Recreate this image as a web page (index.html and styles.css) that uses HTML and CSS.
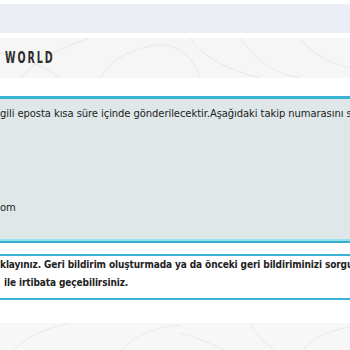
FILE: index.html
```html
<!DOCTYPE html>
<html lang="tr">
<head>
<meta charset="utf-8">
<link rel="stylesheet" href="styles.css">
</head>
<body>
<div class="page">
  <div class="topbar"></div>
  <header class="brand">
    <svg class="texture" width="350" height="40" viewBox="0 0 350 40" aria-hidden="true">
      <g fill="none" stroke="#e8e8e8" stroke-width="1">
        <path d="M20 40 C40 20 60 10 90 0"/>
        <path d="M100 40 C110 25 120 15 150 8 C170 4 190 10 200 40"/>
        <path d="M190 0 C200 15 220 30 260 40"/>
        <path d="M240 0 C255 20 270 35 300 40"/>
        <path d="M300 0 C310 15 330 25 350 30"/>
        <path d="M0 15 C20 20 40 25 60 40"/>
      </g>
    </svg>
    <span class="logo">WORLD</span>
  </header>

  <section class="notice">
    <p class="line">gili eposta kısa süre içinde gönderilecektir.Aşağıdaki takip numarasını saklayınız.</p>
    <p class="line mail">om</p>
  </section>

  <section class="help">
    <p class="line">klayınız. Geri bildirim oluşturmada ya da önceki geri bildiriminizi sorgulamada sorun yaşarsanız</p>
    <p class="line second">ile irtibata geçebilirsiniz.</p>
  </section>

  <footer class="foot">
    <svg class="texture" width="350" height="30" viewBox="0 0 350 30" aria-hidden="true">
      <g fill="none" stroke="#eaeaea" stroke-width="1">
        <path d="M10 30 C25 15 45 5 70 0"/>
        <path d="M120 30 C130 15 150 5 180 2"/>
        <path d="M180 10 C200 15 220 25 230 30"/>
        <path d="M250 0 C255 10 265 22 280 30"/>
        <path d="M300 30 C310 18 325 8 350 4"/>
      </g>
    </svg>
  </footer>
</div>
</body>
</html>
```
FILE: styles.css
```css
html, body {
  margin: 0;
  padding: 0;
  background: #ffffff;
}
.page {
  width: 350px;
  overflow: hidden;
  font-family: "DejaVu Sans", Verdana, sans-serif;
  color: #222;
}
.topbar {
  margin-top: 4px;
  height: 29px;
  background: #eceef6;
}
.brand {
  position: relative;
  margin-top: 5px;
  height: 40px;
  background: #f6f6f6;
  display: flex;
  align-items: center;
}
.texture {
  position: absolute;
  left: 0;
  top: 0;
}
.logo {
  position: relative;
  margin-left: 5px;
  font-family: "DejaVu Sans Condensed", "Liberation Sans Narrow", sans-serif;
  font-weight: bold;
  font-size: 16px;
  letter-spacing: 3px;
  color: #2c2c2c;
  line-height: 1;
  display: inline-block;
  transform: scaleX(0.66);
  transform-origin: left center;
}
.line {
  margin: 0;
  white-space: nowrap;
  font-size: 10px;
  line-height: 18px;
}
.notice .line {
  letter-spacing: -0.08px;
}
.notice {
  position: relative;
  margin-top: 18px;
  height: 136px;
  padding-top: 6px;
  border-top: 3px solid #38b4d2;
  border-bottom: 2px solid #3aaecb;
  background: #dfe7e8;
  box-shadow: inset 0 -3px 0 #e4ecec;
}
.notice::after {
  content: "";
  position: absolute;
  left: 0;
  right: 0;
  bottom: 0;
  height: 2px;
  background: #8fe2f1;
}
.notice .mail {
  margin-top: 76px;
}
.help {
  margin-top: 11px;
  padding: 0 0 6px;
  border-top: 2px solid #38b4d2;
  border-bottom: 2px solid #38b4d2;
  background: #fff;
}
.help .line {
  font-family: "DejaVu Sans Condensed", "DejaVu Sans", sans-serif;
  font-weight: bold;
  letter-spacing: -0.1px;
}
.help .second {
  padding-left: 4px;
}
.foot {
  position: relative;
  margin-top: 23px;
  height: 30px;
  background: #f7f7f7;
}
```
